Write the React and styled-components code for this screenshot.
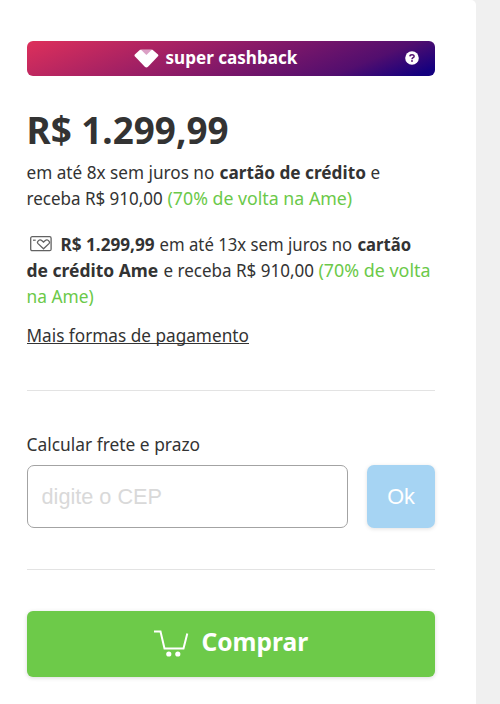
import React from "react";
import styled, { createGlobalStyle } from "styled-components";

const GlobalStyle = createGlobalStyle`
  * { box-sizing: border-box; }
  body {
    margin: 0;
    background: #f0f0f0;
    color: #333;
    font-family: "Noto Sans", "Open Sans", sans-serif;
  }
`;

const Card = styled.main`
  width: 476px;
  height: 704px;
  padding: 41px 41px 0 27px;
  background: #fff;
  border-top-right-radius: 5px;
  overflow: hidden;
`;

const Banner = styled.div`
  display: grid;
  grid-template-columns: 93px 1fr 31px;
  align-items: center;
  height: 35px;
  padding-left: 14px;
  border-radius: 6px;
  background: linear-gradient(158deg, #de305b 0%, #861968 50%, #520e6e 79%, #14007f 96%);
  color: #fff;
`;

const BannerLabel = styled.div`
  grid-column: 2;
  display: flex;
  align-items: center;
  gap: 7px;
  height: 35px;
  line-height: 35px;
  padding-bottom: 2px;
`;

const Diamond = styled.svg`
  display: block;
  width: 25px;
  height: 19px;
  margin-top: 1px;
`;

const Help = styled.svg`
  display: block;
  width: 14px;
  height: 14px;
  margin-left: 1px;
  margin-top: -2px;
`;

const Fit = styled.span`
  display: inline-block;
  width: ${(p) => p.$w}px;
  white-space: nowrap;
  font-size: ${(p) => p.$size || 18}px;
  font-weight: ${(p) => (p.$bold ? 700 : 400)};
  color: ${(p) => (p.$green ? "#6bc949" : "inherit")};
  transform: translateX(-0.5px) scaleX(${(p) => p.$k});
  transform-origin: left center;
`;

const Price = styled.h1`
  margin: 27px 0 4px;
  height: 52px;
  line-height: 52px;
  font-size: 38px;
`;

const Offer = styled.div`
  margin-bottom: ${(p) => p.$gap}px;
`;

const Line = styled.div`
  display: flex;
  align-items: center;
  gap: 5px;
  height: 26px;
  line-height: 26px;
  font-size: 18px;
`;

const CardIcon = styled.svg`
  flex: none;
  display: block;
  width: 22px;
  height: 16px;
  margin: -1px 4px 0 3px;
`;

const MoreLink = styled.a`
  display: block;
  width: 222px;
  height: 22px;
  line-height: 26px;
  border-bottom: 1px solid #333;
  color: #333;
  text-decoration: none;
`;

const Divider = styled.hr`
  height: 1px;
  margin: ${(p) => p.$top}px 0 0;
  border: 0;
  background: #e3e3e3;
`;

const Shipping = styled.form`
  margin-top: 40px;
`;

const Label = styled.label`
  display: block;
  height: 34px;
  line-height: 26px;
`;

const Fields = styled.div`
  display: grid;
  grid-template-columns: 321px 68px;
  justify-content: space-between;
  height: 63px;
`;

const ZipInput = styled.input`
  min-width: 0;
  padding: 0 13.5px;
  border: 1px solid #a3a3a3;
  border-radius: 7px;
  background: #fff;
  font: 21.7px "Liberation Sans", Arial, sans-serif;
  &::placeholder { color: #d9d9d9; opacity: 1; }
`;

const OkButton = styled.button`
  padding: 0;
  border: 0;
  border-radius: 7px;
  background: #a6d4f3;
  color: #fff;
  font: 21.7px "Liberation Sans", Arial, sans-serif;
  box-shadow: 0 1px 4px rgba(0, 0, 0, 0.12);
`;

const BuyButton = styled.button`
  display: flex;
  align-items: center;
  width: 100%;
  height: 66px;
  margin-top: 41px;
  padding: 0 0 0 127px;
  gap: 13px;
  border: 0;
  border-radius: 6px;
  background: #6dca49;
  color: #fff;
  font-family: inherit;
  text-align: left;
  line-height: 34px;
  box-shadow: 0 1px 4px rgba(0, 0, 0, 0.15);
`;

const BuyText = styled.span`
  display: flex;
  height: 41px;
`;

const Cart = styled.svg`
  display: block;
  flex: none;
  width: 35px;
  height: 27px;
  margin-top: -1px;
`;

export default function App() {
  return (
    <>
      <GlobalStyle />
      <Card>
        <Banner>
          <BannerLabel>
            <Diamond viewBox="0 0 25 19" aria-hidden="true">
              <path d="M6 .8h12.5L24 5.6q.7.8 0 1.6L14 17.7q-1.6 1.5-3.2 0L.8 7.2q-.6-.8 0-1.6Z" fill="#fff" />
              <path d="M7 .8h10.8L12.4 6Z" fill="#dba0c5" />
            </Diamond>
            <Fit $bold $w={132} $k={0.948}>super cashback</Fit>
          </BannerLabel>
          <Help viewBox="0 0 14 14" aria-label="ajuda">
            <circle cx="7" cy="7" r="6.8" fill="#fff" />
            <path d="M4.9 5.4C5 3.4 9.2 3.3 9.1 5.4 9.1 6.8 7 6.6 7 8.3" fill="none" stroke="#51106e" strokeWidth="1.5" />
            <circle cx="7" cy="10" r=".9" fill="#51106e" />
          </Help>
        </Banner>

        <Price><Fit $bold $size={38} $w={202} $k={0.969}>R$ 1.299,99</Fit></Price>

        <Offer $gap={20}>
          <Line>
            <Fit $w={188} $k={0.954}>em até 8x sem juros no</Fit>
            <Fit $bold $w={146} $k={0.957}>cartão de crédito</Fit>
            <Fit $w={10} $k={0.95}>e</Fit>
          </Line>
          <Line>
            <Fit $w={136} $k={0.944}>receba R$ 910,00</Fit>
            <Fit $green $w={184} $k={0.986}>(70% de volta na Ame)</Fit>
          </Line>
        </Offer>

        <Offer $gap={13}>
          <Line>
            <CardIcon viewBox="0 0 22 16" fill="none" stroke="#626262" aria-hidden="true">
              <rect x=".7" y=".7" width="20.4" height="14" rx="1.5" strokeWidth="1.3" />
              <path d="M3 4.2h2.7" strokeWidth="1.2" />
              <path d="m13.5 12.8-5.7-5.4c-.7-.8-.5-1.5.2-2.2 1.3-1.6 2.6-1.6 4-.4l1.5 1.3L15 4.8c1.4-1.2 2.7-1.2 4 .4.7.7.9 1.4.2 2.2Z" strokeWidth="1.3" />
            </CardIcon>
            <Fit $bold $w={94} $k={0.953}>R$ 1.299,99</Fit>
            <Fit $w={193} $k={0.93}>em até 13x sem juros no</Fit>
            <Fit $bold $w={54} $k={0.925}>cartão</Fit>
          </Line>
          <Line>
            <Fit $bold $w={132} $k={0.97}>de crédito Ame</Fit>
            <Fit $w={150} $k={0.945}>e receba R$ 910,00</Fit>
            <Fit $green $w={112} $k={0.993}>(70% de volta</Fit>
          </Line>
          <Line>
            <Fit $green $w={67} $k={0.963}>na Ame)</Fit>
          </Line>
        </Offer>

        <MoreLink href="#"><Fit $w={222} $k={0.955}>Mais formas de pagamento</Fit></MoreLink>

        <Divider $top={46} />

        <Shipping>
          <Label htmlFor="cep"><Fit $w={173} $k={0.965}>Calcular frete e prazo</Fit></Label>
          <Fields>
            <ZipInput id="cep" placeholder="digite o CEP" />
            <OkButton type="button">Ok</OkButton>
          </Fields>
        </Shipping>

        <Divider $top={41} />

        <BuyButton type="button">
          <Cart viewBox="0 0 35 27" fill="none" stroke="#fff" strokeWidth="2" aria-hidden="true">
            <path d="M0 1.5h6.5l4 17h19L33.3 3.5" />
            <circle cx="14.8" cy="24" r="2.6" fill="#fff" stroke="none" />
            <circle cx="23.8" cy="24" r="2.6" fill="#fff" stroke="none" />
          </Cart>
          <BuyText><Fit $bold $size={25.5} $w={107} $k={0.963}>Comprar</Fit></BuyText>
        </BuyButton>
      </Card>
    </>
  );
}
